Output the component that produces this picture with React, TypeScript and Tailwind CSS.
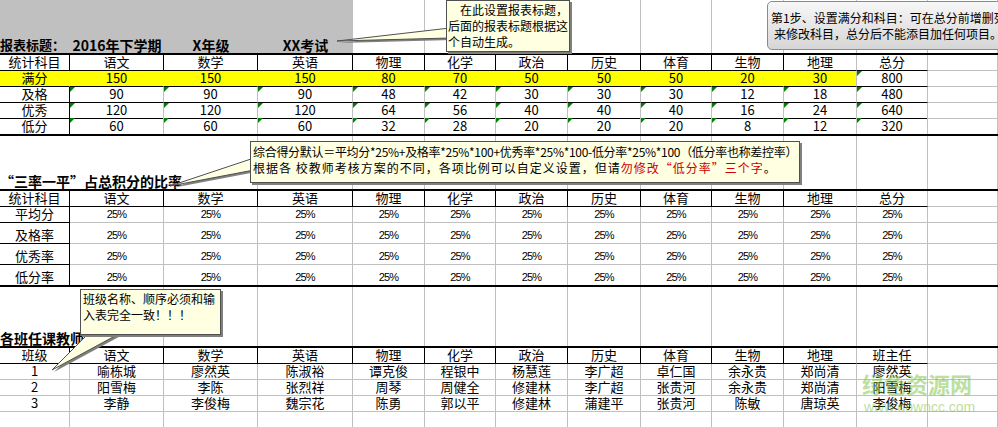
import clsx from "clsx";
import type { ReactNode } from "react";

const GRID =
  "grid grid-cols-[70px_94px_94px_95px_72px_71px_72px_73px_71px_72px_73px_71px_minmax(0,1fr)]";

// k = black rule, g = gridline, y = hidden under yellow fill, n = none
type Edge = "k" | "g" | "y" | "n";

const RIGHT: Record<Edge, string> = {
  k: "border-r border-r-black",
  g: "border-r border-r-[#c0c0c0]",
  y: "border-r border-r-[#ffff00]",
  n: "",
};

const BOTTOM: Record<Edge, string> = {
  k: "border-b border-b-black",
  g: "border-b border-b-[#c0c0c0]",
  y: "border-b border-b-[#ffff00]",
  n: "",
};

type CellSpec = {
  text?: ReactNode;
  r: Edge;
  b: Edge;
  bg?: string;
  tri?: boolean;
  left?: boolean;
};

const SUBJECTS = ["语文", "数学", "英语", "物理", "化学", "政治", "历史", "体育", "生物", "地理"];

const SCORES: [string, (number | string)[]][] = [
  ["满分", [150, 150, 150, 80, 70, 50, 50, 50, 20, 30, 800]],
  ["及格", [90, 90, 90, 48, 42, 30, 30, 30, 12, 18, 480]],
  ["优秀", [120, 120, 120, 64, 56, 40, 40, 40, 16, 24, 640]],
  ["低分", [60, 60, 60, 32, 28, 20, 20, 20, 8, 12, 320]],
];

const RATIO_ROWS = [
  { label: "平均分", h: "h-[16px]" },
  { label: "及格率", h: "h-[21px]" },
  { label: "优秀率", h: "h-[21px]" },
  { label: "低分率", h: "h-[20px]" },
];

const TEACHERS: string[][] = [
  ["1", "喻栋城", "廖然英", "陈淑裕", "谭克俊", "程银中", "杨慧莲", "李广超", "卓仁国", "余永贵", "郑尚清", "廖然英"],
  ["2", "阳雪梅", "李陈", "张烈祥", "周琴", "周健全", "修建林", "李广超", "张贵河", "余永贵", "郑尚清", "阳雪梅"],
  ["3", "李静", "李俊梅", "魏宗花", "陈勇", "郭以平", "修建林", "蒲建平", "张贵河", "陈敏", "唐琼英", "李俊梅"],
];

function Cell({ text, r, b, bg, tri, left }: CellSpec) {
  return (
    <div
      className={clsx(
        "relative flex items-end whitespace-nowrap pb-[1px] leading-[14px]",
        left ? "justify-start" : "justify-center",
        RIGHT[r],
        BOTTOM[b],
        bg,
      )}
    >
      {tri && (
        <span className="absolute left-0 top-0 h-0 w-0 border-t-[5px] border-r-[5px] border-t-[#008000] border-r-transparent" />
      )}
      {text}
    </div>
  );
}

function Row({ h, cells }: { h: string; cells: CellSpec[] }) {
  return (
    <div className={clsx(GRID, h)}>
      {cells.map((c, i) => (
        <Cell key={i} {...c} />
      ))}
    </div>
  );
}

function Rule() {
  return <div className="h-[2px] bg-black" />;
}

function Title({ children, size = "text-[14px]" }: { children: ReactNode; size?: string }) {
  return <span className={clsx("font-bold", size)}>{children}</span>;
}

function headerRow(labels: string[]): CellSpec[] {
  return labels.map((t, i) => ({
    text: t,
    r: i <= 9 ? "k" : "g",
    b: i <= 11 ? "k" : "g",
  }));
}

// blank spacer row with a bold title overflowing from column A
function titleRow(title: ReactNode, hidden: number): CellSpec[] {
  return Array.from({ length: 13 }, (_, i) => ({
    text: i === 0 ? title : undefined,
    left: i === 0,
    r: i < hidden ? "n" : "g",
    b: "n",
  }));
}

function Pct() {
  return (
    <span className="font-['Liberation_Sans',sans-serif] text-[11px] leading-[13px] tracking-[-0.8px]">
      25%
    </span>
  );
}

export default function App() {
  const top: CellSpec[] = [
    { text: <Title size="text-[13px]">报表标题：</Title>, left: true, r: "n", b: "n", bg: "bg-[#c0c0c0]" },
    { text: <Title>2016年下学期</Title>, r: "n", b: "n", bg: "bg-[#c0c0c0]" },
    { text: <Title>X年级</Title>, r: "n", b: "n", bg: "bg-[#c0c0c0]" },
    { text: <Title>XX考试</Title>, r: "n", b: "n", bg: "bg-[#c0c0c0]" },
    ...Array.from({ length: 9 }, (): CellSpec => ({ r: "g", b: "n" })),
  ];

  return (
    <div className="relative h-[427px] w-[998px] overflow-hidden bg-white font-['Noto_Sans_CJK_SC',sans-serif] text-[13px] text-black">
      {/* 第一部分：满分设置 */}
      <Row h="h-[53px]" cells={top} />
      <Rule />
      <Row h="h-[16px]" cells={headerRow(["统计科目", ...SUBJECTS, "总分", ""])} />
      {SCORES.map(([label, vals], ri) => {
        const full = ri === 0;
        const last = ri === SCORES.length - 1;
        const texts = [label, ...vals.map(String), ""];
        const cells: CellSpec[] = texts.map((t, i) =>
          full
            ? {
                text: t,
                r: i <= 9 ? "y" : "g",
                b: i <= 11 ? "k" : "g",
                bg: i <= 10 ? "bg-[#ffff00]" : undefined,
                tri: i === 11,
              }
            : {
                text: t,
                r: i === 0 ? "k" : "g",
                b: last ? "n" : i <= 11 ? "k" : "g",
                tri: i >= 1 && i <= 11,
              },
        );
        return <Row key={label} h={ri === 2 ? "h-[15px]" : "h-[16px]"} cells={cells} />;
      })}
      <Rule />

      {/* 第二部分：三率一平比率 */}
      <Row h="h-[53px]" cells={titleRow(<Title>“三率一平”占总积分的比率</Title>, 2)} />
      <Rule />
      <Row h="h-[16px]" cells={headerRow(["统计科目", ...SUBJECTS, "总分", ""])} />
      {RATIO_ROWS.map((row, ri) => {
        const last = ri === RATIO_ROWS.length - 1;
        const cells: CellSpec[] = Array.from({ length: 13 }, (_, i) => ({
          text: i === 0 ? row.label : i <= 11 ? <Pct /> : undefined,
          r: i === 0 ? "k" : "g",
          b: last ? "n" : i === 0 ? "k" : "g",
        }));
        return <Row key={row.label} h={row.h} cells={cells} />;
      })}
      <Rule />

      {/* 第三部分：各班任课教师 */}
      <Row h="h-[59px]" cells={titleRow(<Title>各班任课教师</Title>, 1)} />
      <Rule />
      <Row h="h-[16px]" cells={headerRow(["班级", ...SUBJECTS, "班主任", ""])} />
      {[...TEACHERS, []].map((names, ri) => (
        <Row
          key={ri}
          h="h-[16px]"
          cells={Array.from({ length: 13 }, (_, i) => ({ text: names[i], r: "g", b: "g" }))}
        />
      ))}

      {/* 批注的指向尖角 */}
      <svg className="pointer-events-none absolute left-0 top-0" width={998} height={427}>
        <polygon points="452,30 339,43 452,40" fill="#808080" />
        <polygon points="450,28 337,41 450,38" fill="#ffffe1" stroke="#505050" />
        <polygon points="256,160 172,188 256,172" fill="#808080" />
        <polygon points="254,158 170,186 254,170" fill="#ffffe1" stroke="#505050" />
        <polygon points="94,332 54,372 128,332" fill="#808080" />
        <polygon points="92,330 52,370 126,330" fill="#ffffe1" stroke="#505050" />
      </svg>

      {/* 批注 */}
      <div className="absolute left-[446px] top-0 h-[52px] w-[124px] border border-[#505050] bg-[#ffffe1] px-[1px] pt-[1px] text-[12px] leading-[16px] shadow-[2px_2px_0_#808080]">
        <div>　在此设置报表标题，</div>
        <div>后面的报表标题根据这</div>
        <div>个自动生成。</div>
      </div>

      <div className="absolute left-[767px] top-[1px] h-[49px] w-[260px] rounded-[5px] border border-[#8a8a8a] bg-linear-to-b from-[#f7f7f7] to-[#d6d6d6] pl-[3px] pt-[8px] text-[12px] leading-[16px] whitespace-nowrap">
        <div>第1步、设置满分和科目：可在总分前增删列</div>
        <div className="pl-[3px]">来修改科目，总分后不能添目加任何项目。</div>
      </div>

      <div className="absolute left-[250px] top-[141px] h-[42px] w-[550px] border border-[#505050] bg-[#ffffe1] pl-[2px] pt-[2px] text-[12px] leading-[16px] whitespace-nowrap shadow-[2px_2px_0_#808080]">
        <div className="tracking-[-0.3px]">
          综合得分默认＝平均分*25%+及格率*25%*100+优秀率*25%*100-低分率*25%*100（低分率也称差控率）
        </div>
        <div className="tracking-[1px]">
          根据各 校教师考核方案的不同，各项比例可以自定义设置，但请
          <span className="text-[#cc0000]">勿修改“低分率”三个字</span>。
        </div>
      </div>

      <div className="absolute left-[80px] top-[289px] h-[46px] w-[141px] border border-[#505050] bg-[#ffffe1] pl-[2px] pt-[1px] text-[12px] leading-[16px] shadow-[2px_2px_0_#808080]">
        <div>班级名称、顺序必须和输</div>
        <div>入表完全一致！！！</div>
      </div>

      {/* 水印 */}
      <div className="pointer-events-none absolute left-[862px] top-[371px] text-[22px] font-bold leading-[24px] text-[#7dc242] opacity-50">
        绿色资源网
      </div>
      <div className="pointer-events-none absolute left-[864px] top-[399px] font-['Liberation_Sans',sans-serif] text-[14px] leading-[16px] text-[#7dc242] opacity-50">
        www.downcc.com
      </div>
    </div>
  );
}
